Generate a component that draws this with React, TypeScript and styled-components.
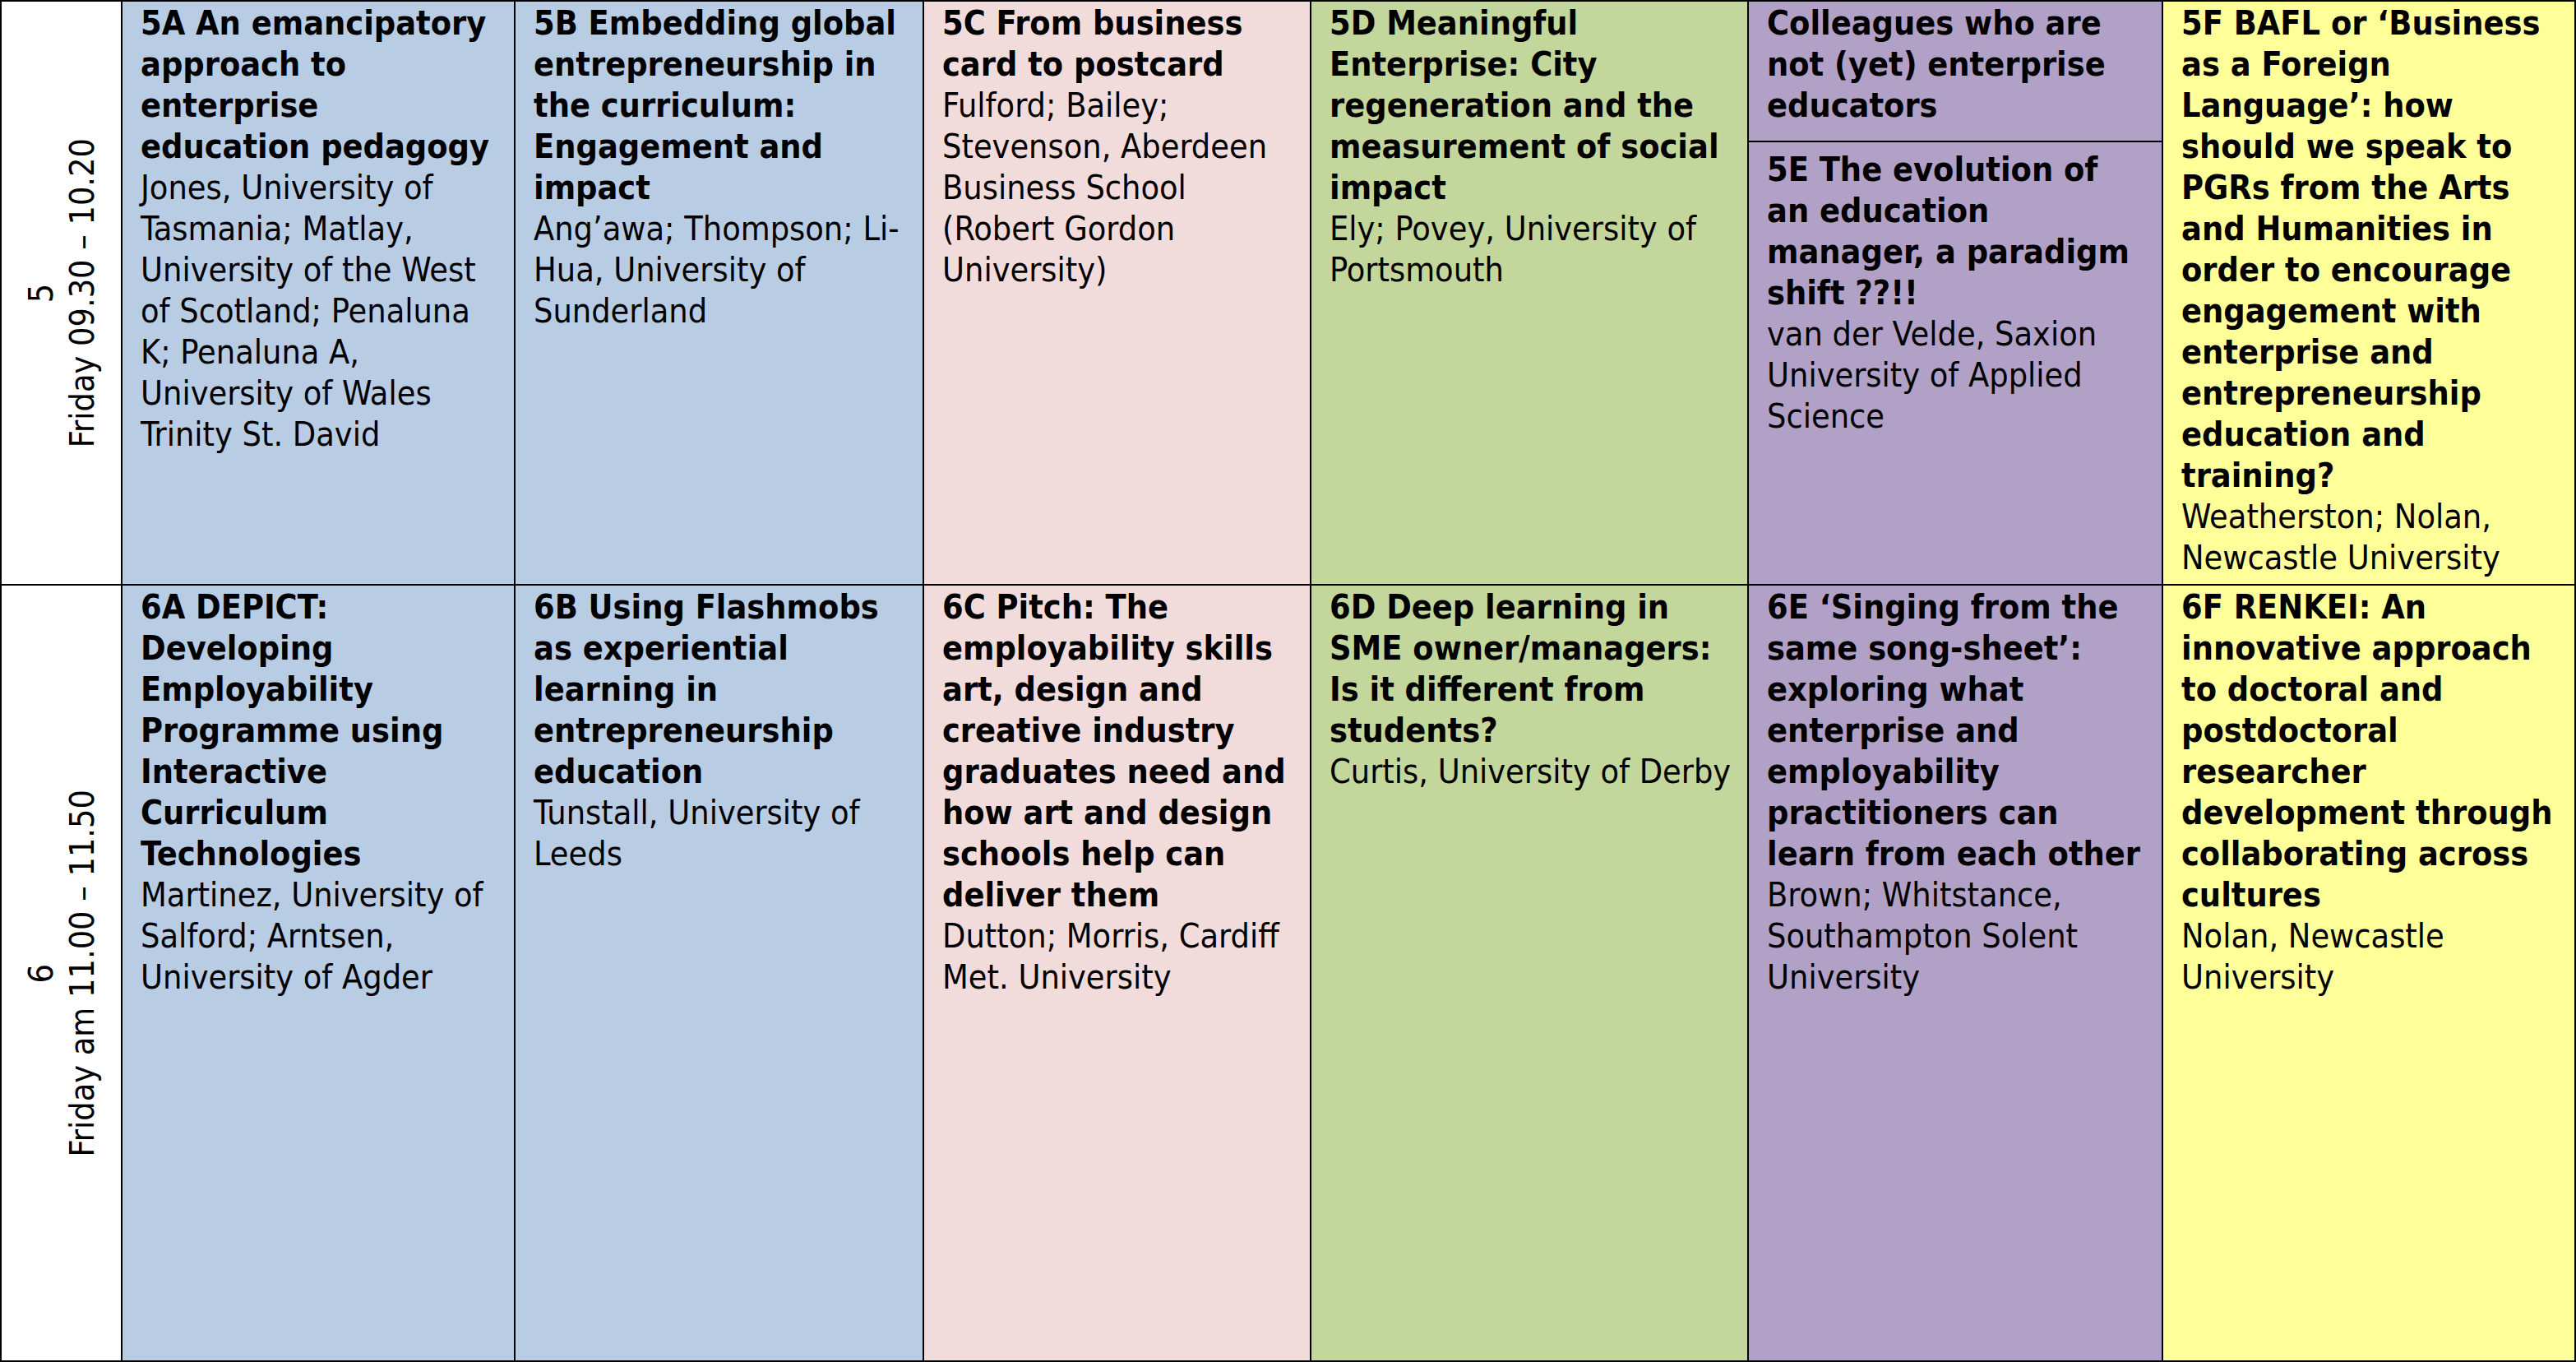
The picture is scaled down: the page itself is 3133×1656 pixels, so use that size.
import React from 'react';
import styled, { createGlobalStyle } from 'styled-components';

const GlobalStyle = createGlobalStyle`
  html, body { margin: 0; padding: 0; background: #ffffff; }
  body { width: 3133px; height: 1656px; overflow: hidden; }
`;

const Table = styled.div`
  display: grid;
  grid-template-columns: 145px 476px 495px 469px 530px 502px 500px;
  grid-template-rows: 708px 942px;
  gap: 2px;
  padding: 2px;
  width: 3133px;
  height: 1656px;
  box-sizing: border-box;
  background: #000000;
  font-family: "DejaVu Sans Condensed", "DejaVu Sans", sans-serif;
  font-size: 41px;
  line-height: 50px;
  color: #000000;
`;

const TimeCell = styled.div`
  background: #ffffff;
  display: flex;
  align-items: center;
  justify-content: center;
  overflow: hidden;
`;

const TimeLabel = styled.div`
  writing-mode: vertical-rl;
  transform: rotate(180deg);
  text-align: center;
  white-space: nowrap;
`;

const Cell = styled.div<{ $bg: string }>`
  background: ${(p) => p.$bg};
  padding: 1px 22px 0;
  white-space: nowrap;
  overflow: hidden;
`;

const SplitCell = styled.div<{ $bg: string }>`
  background: ${(p) => p.$bg};
  display: flex;
  flex-direction: column;
  overflow: hidden;
`;

const SplitTop = styled.div`
  padding: 1px 22px 18px;
  white-space: nowrap;
  border-bottom: 2px solid #000000;
`;

const SplitBottom = styled.div`
  padding: 8px 22px 0;
  white-space: nowrap;
`;

const Title = styled.div`
  font-weight: 700;
`;

const Authors = styled.div`
  font-weight: 400;
`;

const COLORS = ['#b8cce4', '#b8cce4', '#f2dcdb', '#c3d69b', '#b2a1c7', '#ffff99'];

type Session = { title: string[]; authors: string[] };

const Lines: React.FC<{ lines: string[] }> = ({ lines }) => (
  <>
    {lines.map((l, i) => (
      <React.Fragment key={i}>
        {i > 0 && <br />}
        {l}
      </React.Fragment>
    ))}
  </>
);

const SessionBody: React.FC<{ s: Session }> = ({ s }) => (
  <>
    <Title>
      <Lines lines={s.title} />
    </Title>
    <Authors>
      <Lines lines={s.authors} />
    </Authors>
  </>
);

const row5: Session[] = [
  {
    title: ['5A An emancipatory', 'approach to', 'enterprise', 'education pedagogy'],
    authors: [
      'Jones, University of',
      'Tasmania; Matlay,',
      'University of the West',
      'of Scotland; Penaluna',
      'K; Penaluna A,',
      'University of Wales',
      'Trinity St. David',
    ],
  },
  {
    title: ['5B Embedding global', 'entrepreneurship in', 'the curriculum:', 'Engagement and', 'impact'],
    authors: ['Ang\u2019awa; Thompson; Li-', 'Hua, University of', 'Sunderland'],
  },
  {
    title: ['5C From business', 'card to postcard'],
    authors: ['Fulford; Bailey;', 'Stevenson, Aberdeen', 'Business School', '(Robert Gordon', 'University)'],
  },
  {
    title: ['5D Meaningful', 'Enterprise: City', 'regeneration and the', 'measurement of social', 'impact'],
    authors: ['Ely; Povey, University of', 'Portsmouth'],
  },
  {
    title: ['5E The evolution of', 'an education', 'manager, a paradigm', 'shift ??!!'],
    authors: ['van der Velde, Saxion', 'University of Applied', 'Science'],
  },
  {
    title: [
      '5F BAFL or \u2018Business',
      'as a Foreign',
      'Language\u2019: how',
      'should we speak to',
      'PGRs from the Arts',
      'and Humanities in',
      'order to encourage',
      'engagement with',
      'enterprise and',
      'entrepreneurship',
      'education and',
      'training?',
    ],
    authors: ['Weatherston; Nolan,', 'Newcastle University'],
  },
];

const row6: Session[] = [
  {
    title: ['6A DEPICT:', 'Developing', 'Employability', 'Programme using', 'Interactive', 'Curriculum', 'Technologies'],
    authors: ['Martinez, University of', 'Salford; Arntsen,', 'University of Agder'],
  },
  {
    title: ['6B Using Flashmobs', 'as experiential', 'learning in', 'entrepreneurship', 'education'],
    authors: ['Tunstall, University of', 'Leeds'],
  },
  {
    title: [
      '6C Pitch: The',
      'employability skills',
      'art, design and',
      'creative industry',
      'graduates need and',
      'how art and design',
      'schools help can',
      'deliver them',
    ],
    authors: ['Dutton; Morris, Cardiff', 'Met. University'],
  },
  {
    title: ['6D Deep learning in', 'SME owner/managers:', 'Is it different from', 'students?'],
    authors: ['Curtis, University of Derby'],
  },
  {
    title: [
      '6E \u2018Singing from the',
      'same song-sheet\u2019:',
      'exploring what',
      'enterprise and',
      'employability',
      'practitioners can',
      'learn from each other',
    ],
    authors: ['Brown; Whitstance,', 'Southampton Solent', 'University'],
  },
  {
    title: [
      '6F RENKEI: An',
      'innovative approach',
      'to doctoral and',
      'postdoctoral',
      'researcher',
      'development through',
      'collaborating across',
      'cultures',
    ],
    authors: ['Nolan, Newcastle', 'University'],
  },
];

const App: React.FC = () => (
  <>
    <GlobalStyle />
    <Table>
      <TimeCell>
        <TimeLabel>
          5<br />
          Friday 09.30 – 10.20
        </TimeLabel>
      </TimeCell>
      {row5.map((s, i) =>
        i === 4 ? (
          <SplitCell key={i} $bg={COLORS[i]}>
            <SplitTop>
              <Title>
                <Lines lines={['Colleagues who are', 'not (yet) enterprise', 'educators']} />
              </Title>
            </SplitTop>
            <SplitBottom>
              <SessionBody s={s} />
            </SplitBottom>
          </SplitCell>
        ) : (
          <Cell key={i} $bg={COLORS[i]}>
            <SessionBody s={s} />
          </Cell>
        )
      )}
      <TimeCell>
        <TimeLabel>
          6<br />
          Friday am 11.00 – 11.50
        </TimeLabel>
      </TimeCell>
      {row6.map((s, i) => (
        <Cell key={i} $bg={COLORS[i]}>
          <SessionBody s={s} />
        </Cell>
      ))}
    </Table>
  </>
);

export default App;
